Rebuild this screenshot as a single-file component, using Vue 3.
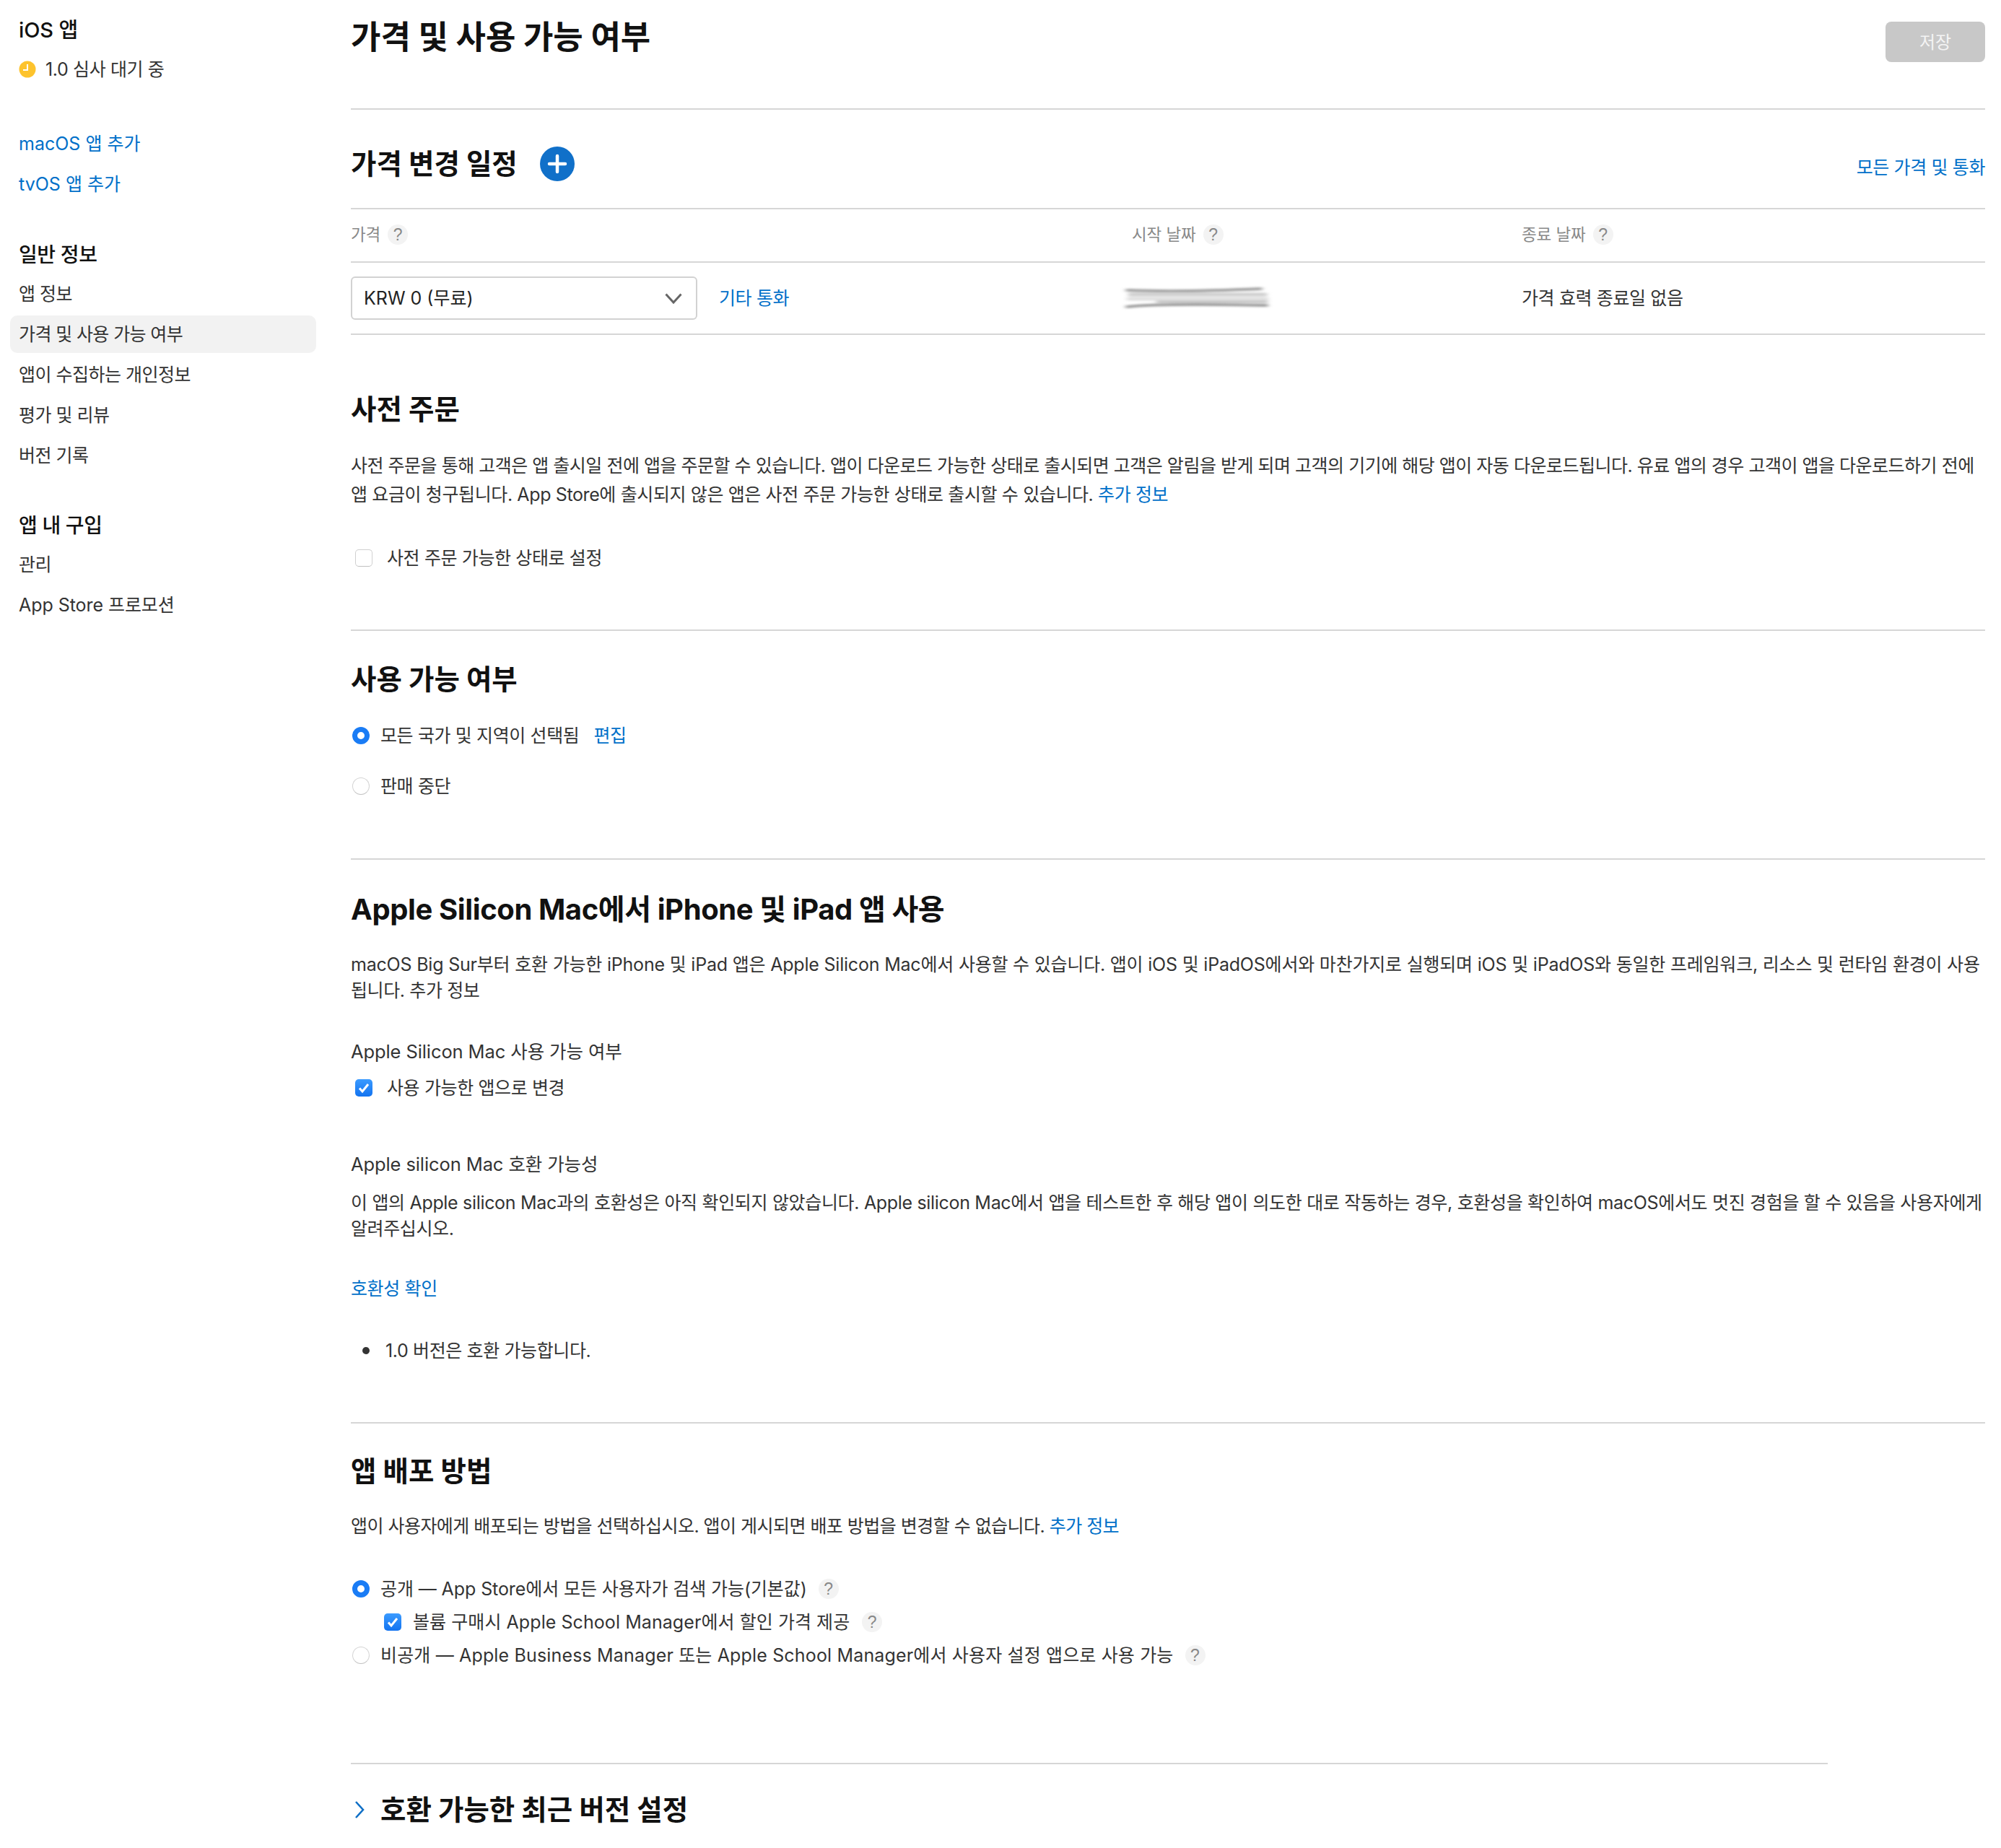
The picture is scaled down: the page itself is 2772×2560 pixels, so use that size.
<script setup>
const generalNav = [
  { label: '앱 정보', cls: 'ko' },
  { label: '가격 및 사용 가능 여부', cls: 'ko-tight active' },
  { label: '앱이 수집하는 개인정보', cls: 'ko' },
  { label: '평가 및 리뷰', cls: 'ko' },
  { label: '버전 기록', cls: 'ko' }
]
const purchaseNav = [
  { label: '관리', cls: 'ko' },
  { label: 'App Store 프로모션', cls: 'mixed' }
]
</script>

<template>
  <div class="page">
    <aside class="side">
      <div class="app-title">iOS 앱</div>
      <div class="status">
        <svg class="clock" viewBox="0 0 24 24" width="24" height="24">
          <circle cx="12" cy="12" r="11.5" fill="#fdc32d" />
          <path d="M12 5v8H6" fill="none" stroke="#fff" stroke-width="2" />
        </svg>
        <span>1.0 심사 대기 중</span>
      </div>
      <a class="nav-link first">macOS 앱 추가</a>
      <a class="nav-link">tvOS 앱 추가</a>
      <div class="nav-head general">일반 정보</div>
      <div class="nav-list">
        <div v-for="item in generalNav" :key="item.label" class="nav-item" :class="item.cls">{{ item.label }}</div>
      </div>
      <div class="nav-head purchase">앱 내 구입</div>
      <div class="nav-list">
        <div v-for="item in purchaseNav" :key="item.label" class="nav-item" :class="item.cls">{{ item.label }}</div>
      </div>
    </aside>

    <main class="main">
      <header class="top">
        <h1>가격 및 사용 가능 여부</h1>
        <button class="save">저장</button>
      </header>

      <section class="schedule">
        <div class="schedule-head">
          <h2>가격 변경 일정</h2>
          <svg class="plus" viewBox="0 0 48 48" width="48" height="48">
            <circle cx="24" cy="24" r="24" fill="#1070c9" />
            <path d="M24 13v22M13 24h22" stroke="#fff" stroke-width="4.5" stroke-linecap="round" />
          </svg>
          <a class="link all">모든 가격 및 통화</a>
        </div>
        <div class="grid grid-head">
          <div class="th">가격 <span class="q">?</span></div>
          <div class="th">시작 날짜 <span class="q">?</span></div>
          <div class="th">종료 날짜 <span class="q">?</span></div>
        </div>
        <div class="grid grid-row">
          <div class="price">
            <div class="select">
              <span>KRW 0 (무료)</span>
              <svg viewBox="0 0 24 15" width="24" height="15"><path d="M1.5 1.5L12 13 22.500 1.500" fill="none" stroke="#666" stroke-width="3" /></svg>
            </div>
            <a class="link">기타 통화</a>
          </div>
          <div class="date">
            <svg class="smear" viewBox="0 0 230 50" width="230" height="50">
              <defs><filter id="sm" x="-10%" y="-50%" width="120%" height="200%"><feGaussianBlur stdDeviation="3.4 1.8" /></filter></defs>
              <g filter="url(#sm)" fill="none" stroke-linecap="round">
                <path d="M18 15 Q90 18 204 13" stroke="#a0a0a0" stroke-width="4" />
                <path d="M22 21 H210" stroke="#cfcfcf" stroke-width="5" />
                <path d="M20 27 H212" stroke="#e0e0e0" stroke-width="5" />
                <path d="M60 31 H212" stroke="#bdbdbd" stroke-width="3" />
                <path d="M18 38 Q60 33 212 36" stroke="#9a9a9a" stroke-width="4" />
              </g>
            </svg>
          </div>
          <div>가격 효력 종료일 없음</div>
        </div>
      </section>

      <section class="preorder">
        <h2>사전 주문</h2>
        <p class="para wide"><span class="ls-a">사전 주문을 통해 고객은 앱 출시일 전에 앱을 주문할 수 있습니다. 앱이 다운로드 가능한 상태로 출시되면 고객은 알림을 받게 되며 고객의 기기에 해당 앱이 자동 다운로드됩니다. 유료 앱의 경우 고객이 앱을 다운로드하기 전에</span><br />앱 요금이 청구됩니다. App Store에 출시되지 않은 앱은 사전 주문 가능한 상태로 출시할 수 있습니다. <a class="link">추가 정보</a></p>
        <div class="row check-row preorder-check">
          <span class="box"></span>
          <span>사전 주문 가능한 상태로 설정</span>
        </div>
      </section>

      <section class="availability">
        <h2>사용 가능 여부</h2>
        <div class="row radio-row first-radio">
          <span class="radio on"></span>
          <span>모든 국가 및 지역이 선택됨</span>
          <a class="link edit">편집</a>
        </div>
        <div class="row radio-row second-radio">
          <span class="radio"></span>
          <span>판매 중단</span>
        </div>
      </section>

      <section class="silicon">
        <h2 class="latin">Apple Silicon Mac에서 iPhone 및 iPad 앱 사용</h2>
        <p class="para tight"><span class="ls-b">macOS Big Sur부터 호환 가능한 iPhone 및 iPad 앱은 Apple Silicon Mac에서 사용할 수 있습니다. 앱이 iOS 및 iPadOS에서와 마찬가지로 실행되며 iOS 및 iPadOS와 동일한 프레임워크, 리소스 및 런타임 환경이 사용</span><br />됩니다. 추가 정보</p>
        <div class="label label-a">Apple Silicon Mac 사용 가능 여부</div>
        <div class="row check-row check-a">
          <span class="box on"><svg viewBox="0 0 24 24" width="24" height="24"><path d="M6 12.5l4 4.500 8-10" fill="none" stroke="#fff" stroke-width="3" /></svg></span>
          <span>사용 가능한 앱으로 변경</span>
        </div>
        <div class="label label-b">Apple silicon Mac 호환 가능성</div>
        <p class="para tight para-b"><span class="ls-c">이 앱의 Apple silicon Mac과의 호환성은 아직 확인되지 않았습니다. Apple silicon Mac에서 앱을 테스트한 후 해당 앱이 의도한 대로 작동하는 경우, 호환성을 확인하여 macOS에서도 멋진 경험을 할 수 있음을 사용자에게</span><br />알려주십시오.</p>
        <div class="label-c"><a class="link">호환성 확인</a></div>
        <ul class="bullets"><li><span class="dot"></span>1.0 버전은 호환 가능합니다.</li></ul>
      </section>

      <section class="distribution">
        <h2>앱 배포 방법</h2>
        <p class="para dist-para">앱이 사용자에게 배포되는 방법을 선택하십시오. 앱이 게시되면 배포 방법을 변경할 수 없습니다. <a class="link">추가 정보</a></p>
        <div class="dist-options">
          <div class="row opt opt-1">
            <span class="radio on"></span>
            <span>공개 — App Store에서 모든 사용자가 검색 가능(기본값)</span>
            <span class="q">?</span>
          </div>
          <div class="row opt sub">
            <span class="box on"><svg viewBox="0 0 24 24" width="24" height="24"><path d="M6 12.500l4 4.500 8-10" fill="none" stroke="#fff" stroke-width="3" /></svg></span>
            <span>볼륨 구매시 Apple School Manager에서 할인 가격 제공</span>
            <span class="q">?</span>
          </div>
          <div class="row opt opt-3">
            <span class="radio"></span>
            <span>비공개 — Apple Business Manager 또는 Apple School Manager에서 사용자 설정 앱으로 사용 가능</span>
            <span class="q">?</span>
          </div>
        </div>
      </section>

      <section class="recent">
        <svg viewBox="0 0 14 24" width="14" height="24"><path d="M2 1l10 11L2 23" fill="none" stroke="#0f6fc6" stroke-width="2.600" /></svg>
        <h2>호환 가능한 최근 버전 설정</h2>
      </section>
    </main>
  </div>
</template>

<style>
html, body { margin: 0; background: #fff; }
</style>

<style scoped>
.page {
  display: flex;
  width: 2772px;
  height: 2560px;
  overflow: hidden;
  font-family: Inter, "Noto Sans CJK KR", sans-serif;
  font-size: 25px;
  line-height: 40px;
  color: #333;
  letter-spacing: -0.38px;
}
.side { width: 486px; flex: none; padding-top: 22px; box-sizing: border-box; }
.side > * { margin-left: 26px; }
.app-title, .nav-head { font-size: 29px; font-weight: 500; color: #111; height: 40px; letter-spacing: -0.1px; }
.nav-head { font-size: 28px; letter-spacing: -0.4px; }
.status { display: flex; align-items: center; gap: 13px; margin-top: 14px; height: 40px; }
.nav-link { display: block; height: 56px; line-height: 56px; color: #0070c9; letter-spacing: 0; }
.nav-link.first { margin-top: 55px; }
.nav-head.general { margin-top: 50px; }
.nav-head.purchase { margin-top: 49px; }
.side .nav-list { margin-left: 14px; width: 424px; margin-top: 6px; }
.nav-item { height: 56px; line-height: 56px; padding-left: 12px; }
.nav-item.ko { letter-spacing: -0.5px; }
.nav-item.mixed { letter-spacing: -0.05px; }
.nav-item.ko-tight { letter-spacing: -0.62px; }
.nav-item.active { background: #f2f2f2; border-radius: 10px; height: 52px; line-height: 52px; margin: 2px 0; }

.main { width: 2264px; flex: none; }
h1, h2 { margin: 0; font-weight: 700; color: #111; letter-spacing: 0; }
h1 { font-size: 45px; line-height: 52px; }
h2 { font-size: 38.5px; line-height: 52px; }
h2.latin { font-weight: 700; font-size: 40px; letter-spacing: -0.4px; }
.link { color: #0070c9; }

.top { display: flex; justify-content: space-between; box-sizing: border-box; padding-top: 26px; border-bottom: 2px solid #d6d6d6; height: 152px; }
.save { margin-top: 4px; width: 138px; height: 56px; padding-top: 2px; background: #c8c8c8; border: 0; border-radius: 8px; color: #f4f4f4; font: inherit; font-size: 24px; }

.schedule-head { display: flex; align-items: center; box-sizing: border-box; padding-top: 14px; border-bottom: 2px solid #d6d6d6; height: 138px; }
.plus { margin-left: 31px; }
.all { margin-left: auto; padding-top: 10px; }
.grid { display: grid; grid-template-columns: 1082px 540px 1fr; align-items: center; border-bottom: 2px solid #d6d6d6; box-sizing: border-box; }
.grid-head { height: 74px; padding-bottom: 2px; }
.grid-row { height: 100px; }
.th { font-size: 22.5px; color: #888; display: flex; align-items: center; gap: 10px; letter-spacing: -0.1px; }
.q { display: inline-flex; align-items: center; justify-content: center; width: 28px; height: 28px; border-radius: 50%; background: #f3f3f3; color: #888; font-family: "Liberation Sans", sans-serif; font-size: 23px; }
.price { display: flex; align-items: center; gap: 30px; }
.select { width: 480px; height: 60px; box-sizing: border-box; border: 2px solid #d2d2d2; border-radius: 6px; display: flex; align-items: center; justify-content: space-between; padding: 0 19px 0 16px; color: #222; letter-spacing: 0; }
.date { position: relative; height: 40px; }
.smear { position: absolute; left: -25px; top: -6px; }

.para { margin: 0; white-space: nowrap; }
.wide { line-height: 40px; }
.tight { line-height: 36px; }
.ls-a { letter-spacing: -0.49px; }
.ls-b { letter-spacing: -0.2px; }
.ls-c { letter-spacing: -0.32px; }
.preorder { padding-top: 77px; padding-bottom: 79px; border-bottom: 2px solid #d6d6d6; }
.preorder .para { margin-top: 32px; }
.row { display: flex; align-items: center; height: 40px; }
.check-row { padding-left: 6px; gap: 20px; }
.preorder-check { margin-top: 48px; }
.box { width: 24px; height: 24px; flex: none; box-sizing: border-box; border: 1.5px solid #d0d0d0; border-bottom-color: #c0c0c0; border-radius: 5px; background: #fff; display: block; }
.box.on { background: linear-gradient(#3b9bff, #1273f0); border: 0; }
.box svg { display: block; }
.radio { width: 24px; height: 24px; margin-left: 2px; flex: none; box-sizing: border-box; border-radius: 50%; border: 1.5px solid #d4d4d4; border-bottom-color: #c0c0c0; background: #fff; }
.radio.on { border: 7.5px solid #1a7cf5; }
.availability { padding-top: 41px; padding-bottom: 80px; border-bottom: 2px solid #d6d6d6; }
.radio-row { gap: 15px; }
.first-radio { margin-top: 32px; }
.second-radio { margin-top: 30px; }
.edit { margin-left: 5px; }
.silicon { padding-top: 43px; padding-bottom: 79px; border-bottom: 2px solid #d6d6d6; }
.silicon > .para { margin-top: 32px; }
.label { height: 40px; font-size: 25.5px; letter-spacing: -0.1px; }
.label-a { margin-top: 47px; }
.check-a { margin-top: 10px; }
.label-b { margin-top: 66px; }
.silicon > .para-b { margin-top: 15px; }
.label-c { margin-top: 45px; height: 40px; }
.bullets { margin: 46px 0 0; padding: 0; height: 40px; list-style: none; }
.bullets li { display: flex; align-items: center; }
.dot { width: 10px; height: 10px; border-radius: 50%; background: #333; margin: 0 22px 0 16px; }
.distribution { padding-top: 40px; padding-bottom: 126px; border-bottom: 2px solid #d6d6d6; width: 2046px; }
.dist-para { margin-top: 30px; letter-spacing: -0.53px; }
.dist-options { margin-top: 44px; }
.opt { height: 46px; gap: 15px; white-space: nowrap; }
.opt-1 { letter-spacing: -0.09px; }
.opt-3 { letter-spacing: 0.16px; }
.opt .q { margin-left: 1px; }
.opt.sub { padding-left: 46px; gap: 16px; letter-spacing: 0.07px; }
.recent { display: flex; align-items: center; gap: 22px; padding-top: 37px; padding-left: 5px; }
</style>
